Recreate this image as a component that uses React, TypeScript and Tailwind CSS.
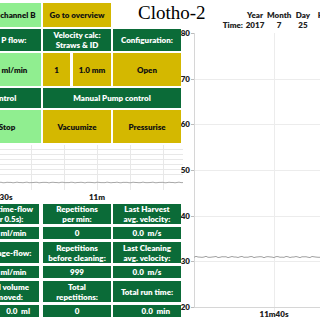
import React from "react";

const dark = "bg-[#0b6b38] text-white";
const light = "bg-[#90ee90] text-[#111]";
const gold = "bg-[#d4b800] text-[#111]";

function Box({
  tone,
  className = "",
  children,
}: {
  tone: string;
  className?: string;
  children?: React.ReactNode;
}) {
  return (
    <div
      className={`flex shrink-0 items-center justify-center text-center whitespace-pre leading-[10px] ${tone} ${className}`}
    >
      {children}
    </div>
  );
}

function noise(i: number, a: number) {
  return a * (0.6 * Math.sin(i * 0.7) + 0.4 * Math.sin(i * 1.9 + 1));
}

function SmallChart() {
  const pts: string[] = [];
  for (let x = 0; x <= 280; x += 2) pts.push(`${x},${(37.5 + noise(x, 0.4)).toFixed(2)}`);
  const hs = [4.5, 9.5, 14.5, 19.5, 24.5, 29.5];
  const vs = [95.5, 128.5, 161.5, 194.5, 227.5, 260.5];
  return (
    <div className="w-[280px] h-[57px] overflow-hidden mt-[2px]">
      <svg width="280" height="57" className="block">
        {hs.map((y) => (
          <line key={y} x1="0" x2="280" y1={y} y2={y} stroke="#e8e8e8" strokeWidth="1" />
        ))}
        {vs.map((x) => (
          <line key={x} x1={x} x2={x} y1="0" y2="45" stroke="#e8e8e8" strokeWidth="1" />
        ))}
        <polyline points={pts.join(" ")} fill="none" stroke="#a8a8a8" strokeWidth="1" />
        <g fontFamily="Lato, sans-serif" fontWeight="800" fontSize="8" fill="#222" textAnchor="middle">
          <text x="95" y="55">10m30s</text>
          <text x="194" y="55">11m</text>
        </g>
      </svg>
    </div>
  );
}

function BigChart() {
  const labels = [80, 70, 60, 50, 40, 30, 20];
  const ys = labels.map((_, i) => 6 + i * 45.67);
  const pts: string[] = [];
  for (let x = 13; x <= 139; x += 2) pts.push(`${x},${(230 + noise(x, 0.7)).toFixed(2)}`);
  return (
    <svg width="139" height="293" className="block shrink-0">
      {ys.slice(1, 6).map((y) => (
        <line key={y} x1="13" x2="139" y1={Math.round(y) + 0.5} y2={Math.round(y) + 0.5} stroke="#ececec" />
      ))}
      <line x1="93.5" x2="93.5" y1="6" y2="285" stroke="#ececec" />
      <line x1="13.5" x2="13.5" y1="6" y2="280" stroke="#d6d6d6" />
      <line x1="13" x2="139" y1="280.5" y2="280.5" stroke="#d6d6d6" />
      {ys.map((y) => (
        <line key={"t" + y} x1="10" x2="13" y1={Math.round(y) + 0.5} y2={Math.round(y) + 0.5} stroke="#bbb" />
      ))}
      <polyline points={pts.join(" ")} fill="none" stroke="#a0a0a0" strokeWidth="1" />
      <g fontFamily="Lato, sans-serif" fontWeight="800" fontSize="8" fill="#222">
        {labels.map((l, i) => (
          <text key={l} x="9" y={ys[i] + 3} textAnchor="end">
            {l}
          </text>
        ))}
        <text x="93" y="290" textAnchor="middle">
          11m40s
        </text>
      </g>
    </svg>
  );
}

export default function App() {
  return (
    <div className="w-[320px] h-[320px] overflow-hidden bg-white text-[8px] font-extrabold [font-family:Lato,sans-serif] text-[#222]">
      {/* top row */}
      <div className="flex h-[27px] pt-[3px] ml-[-97px] items-start">
        <Box tone={light} className="w-[68px] h-[24px]">Go to channel A</Box>
        <Box tone={light} className="w-[68px] h-[24px] ml-[2px]">Go to channel B</Box>
        <Box tone={gold} className="w-[68px] h-[24px] ml-[2px]">Go to overview</Box>
        <div className="w-[60px] shrink-0 ml-[27px] mt-[-1px] whitespace-nowrap text-[19px] leading-[22px] font-normal text-black [font-family:'Liberation_Serif',serif]">
          Clotho-2
        </div>
        <div className="shrink-0 mt-[7px] grid grid-cols-[45px_24px_24px_24px_24px] leading-[10px] text-center whitespace-nowrap">
          <div />
          <div>Year</div>
          <div>Month</div>
          <div>Day</div>
          <div>Hour</div>
          <div className="text-right">Time:</div>
          <div>2017</div>
          <div>7</div>
          <div>25</div>
          <div>11</div>
        </div>
      </div>

      {/* main */}
      <div className="flex">
        <div className="ml-[-97px] w-[278px] shrink-0 flex flex-col">
          <div className="pt-[2px] grid grid-cols-[68px_68px_68px_68px] grid-rows-[22px_33px_20px_33px] gap-[2px]">
            <Box tone={dark}>{"Set Q flow:"}</Box>
            <Box tone={dark}>{"Set P flow:"}</Box>
            <Box tone={dark}>{"Velocity calc:\nStraws & ID"}</Box>
            <Box tone={dark}>{"Configuration:"}</Box>

            <Box tone={light}>{"0.0  ml/min"}</Box>
            <Box tone={light}>{"0.0  ml/min"}</Box>
            <div className="flex gap-[3px]">
              <Box tone={gold} className="w-[27px]">1</Box>
              <Box tone={gold} className="flex-1">1.0 mm</Box>
            </div>
            <Box tone={gold}>Open</Box>

            <Box tone={dark} className="col-span-2">{"Automatic Pump control"}</Box>
            <Box tone={dark} className="col-span-2">{"Manual Pump control"}</Box>

            <Box tone={light}>Start</Box>
            <Box tone={light}>Stop</Box>
            <Box tone={gold}>Vacuumize</Box>
            <Box tone={gold}>Pressurise</Box>
          </div>

          <SmallChart />

          <div className="mt-[2px] grid grid-cols-[68px_68px_68px_68px] grid-rows-[20px_12px_21px_12px_21px_12px] gap-x-[2px] gap-y-[3px]">
            <div className="row-span-6" />
            <Box tone={dark} className="mr-[2px]">{"Real-time-flow\n(per 0.5s):"}</Box>
            <Box tone={dark}>{"Repetitions\nper min:"}</Box>
            <Box tone={dark}>{"Last Harvest\navg. velocity:"}</Box>

            <Box tone={dark} className="mr-[2px]">{"0.0  ml/min"}</Box>
            <Box tone={dark}>0</Box>
            <Box tone={dark}>{"0.0  m/s"}</Box>

            <Box tone={dark} className="mr-[2px]">{"Average-flow:"}</Box>
            <Box tone={dark}>{"Repetitions\nbefore cleaning:"}</Box>
            <Box tone={dark}>{"Last Cleaning\navg. velocity:"}</Box>

            <Box tone={dark} className="mr-[2px]">{"0.0  ml/min"}</Box>
            <Box tone={dark}>999</Box>
            <Box tone={dark}>{"0.0  m/s"}</Box>

            <Box tone={dark} className="mr-[2px]">{"Total volume\nremoved:"}</Box>
            <Box tone={dark}>{"Total\nrepetitions:"}</Box>
            <Box tone={dark}>{"Total run time:"}</Box>

            <Box tone={dark} className="mr-[2px] !justify-end pr-[9px]">{"0.0  ml"}</Box>
            <Box tone={dark}>0</Box>
            <Box tone={dark} className="!justify-end pr-[11px]">{"0.0  min"}</Box>
          </div>
        </div>
        <BigChart />
      </div>
    </div>
  );
}
